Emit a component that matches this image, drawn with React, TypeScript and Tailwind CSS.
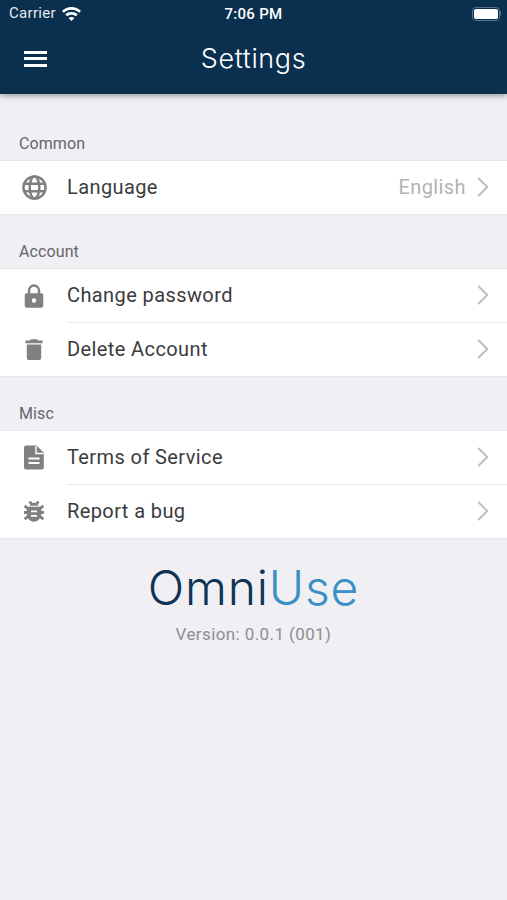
import { ReactNode } from 'react';
import { ChevronRight } from 'lucide-react';

const GlobeIcon = () => (
  <svg width="25" height="25" viewBox="0 0 26 26" fill="none" stroke="#808080" strokeWidth="2.6">
    <circle cx="13" cy="13" r="11.5" />
    <ellipse cx="13" cy="13" rx="5" ry="11.500" />
    <path d="M2.600 9h20.800M2.600 17h20.800" />
  </svg>
);

const LockIcon = () => (
  <svg width="20" height="26" viewBox="0 0 22 27" fill="none">
    <path d="M5.500 11V7.500a5.500 5.500 0 0 1 11 0V11" stroke="#808080" strokeWidth="2.600" />
    <path
      fillRule="evenodd"
      d="M3 10.500h16a2.200 2.200 0 0 1 2.200 2.200v11.600a2.200 2.200 0 0 1-2.200 2.200H3a2.200 2.200 0 0 1-2.200-2.200V12.700a2.200 2.200 0 0 1 2.200-2.200zM11 16a2.400 2.400 0 1 0 0 4.800 2.400 2.400 0 0 0 0-4.800z"
      fill="#808080"
    />
  </svg>
);

const TrashIcon = () => (
  <svg width="18" height="23" viewBox="0 0 20 24" fill="#808080">
    <path d="M6.500 0.500h7l1 1.500H19.500v3H0.500V2h5z" />
    <path d="M2 6.500h16v15a2.200 2.200 0 0 1-2.200 2.200H4.200A2.200 2.200 0 0 1 2 21.500z" />
  </svg>
);

const DocIcon = () => (
  <svg width="20" height="25" viewBox="0 0 20 25">
    <path
      fill="#808080"
      d="M2 .5h10.500L19.800 7.800V22.500a2 2 0 0 1-2 2H2a2 2 0 0 1-2-2V2.500a2 2 0 0 1 2-2z"
    />
    <path d="M12 1v7.500h7.500" fill="none" stroke="#ffffff" strokeWidth="1.400" />
    <path d="M4.500 13.500h11M4.500 18h11" stroke="#ffffff" strokeWidth="2.200" />
  </svg>
);

const BugIcon = () => (
  <svg width="20" height="21" viewBox="0 0 20 21" fill="#808080">
    <path d="M5.500 4.800C6 2.800 8 1.800 10 1.800s4 1 4.500 3z" />
    <path
      fillRule="evenodd"
      d="M4 5.800h12c1 1.200 1.500 2.800 1.500 5.200 0 5.500-3.200 9.800-7.500 9.800s-7.500-4.300-7.500-9.800c0-2.400.5-4 1.500-5.200zM7 9.500v1.800h6V9.500zM7 14v1.800h6V14z"
    />
    <path
      d="M5.500.5l2 2.500M14.500.5l-2 2.500M.5 5l3.500 2.500M19.500 5L16 7.500M0 11.500h4M20 11.500h-4M.5 18l3.500-2.500M19.500 18L16 15.500"
      stroke="#808080"
      strokeWidth="2.800"
      fill="none"
    />
  </svg>
);

const WifiIcon = () => (
  <svg width="19" height="14" viewBox="0 0 19 14" fill="#ffffff">
    <path d="M9.500 0C5.800 0 2.600 1.400 0 3.700l1.800 2C3.900 3.900 6.600 2.800 9.500 2.800s5.600 1.100 7.700 2.900l1.800-2C16.400 1.400 13.200 0 9.500 0z" />
    <path d="M9.500 5c-2.400 0-4.500.9-6.200 2.300l1.800 2c1.200-1 2.700-1.600 4.400-1.600s3.200.6 4.400 1.600l1.800-2C14 5.900 11.900 5 9.500 5z" />
    <path d="M9.500 10c-1.100 0-2.100.4-2.900 1.100l2.900 3 2.900-3c-.8-.7-1.800-1.100-2.900-1.100z" />
  </svg>
);

type RowProps = {
  icon: ReactNode;
  label: string;
  value?: string;
  divider?: boolean;
};

const Row = ({ icon, label, value, divider }: RowProps) => (
  <div className={`flex items-stretch bg-white ${divider ? 'h-[54px]' : 'h-[53px]'}`}>
    <div className="flex w-[67px] shrink-0 items-center justify-center pb-[1px] pl-[1px]">{icon}</div>
    <div className={`flex flex-1 items-center pr-[7px] ${divider ? 'border-b border-[#ebebef]' : ''}`}>
      <span className="mb-[1px] flex-1 text-[20px] tracking-[0.4px] text-[#3b3b3d]">{label}</span>
      {value && <span className="mb-[1px] text-[20px] tracking-[0.4px] text-[#b2b2b4]">{value}</span>}
      <ChevronRight size={34} strokeWidth={1.3} className="mb-[1px] text-[#bdbdc0]" />
    </div>
  </div>
);

const Section = ({ title, first, children }: { title: string; first?: boolean; children: ReactNode }) => (
  <section>
    <div
      className={`flex items-end pb-[6px] pl-[19px] text-[16px] leading-[20px] tracking-[0.1px] text-[#66666a] ${
        first ? 'h-[66px]' : 'h-[53px]'
      }`}
    >
      {title}
    </div>
    <div className="border-y border-[#e6e6ea]">{children}</div>
  </section>
);

const App = () => {
  return (
    <div className="h-[900px] w-[507px] overflow-hidden bg-[#efeff4] font-['Roboto',sans-serif]">
      {/* Header */}
      <header className="relative h-[94px] bg-[#0b2f4f] text-white shadow-[0_2px_6px_rgba(0,0,0,0.35)]">
        <div className="flex h-[27px] items-center justify-between pl-[9px] pr-[6px]">
          <div className="flex items-center gap-[6px] text-[15px] tracking-[0.3px] text-[#e4e8ec]">
            Carrier
            <WifiIcon />
          </div>
          <div className="absolute left-0 right-0 top-[5px] text-center text-[15px] font-medium leading-[18px] tracking-[0.3px]">
            7:06 PM
          </div>
          <div className="flex items-center">
            <div className="flex h-[14px] w-[28px] items-center justify-center rounded-[4px] border border-[#5a7187]">
              <div className="h-[10px] w-[24px] rounded-[2px] bg-white" />
            </div>
            <div className="h-[5px] w-[1.500px] rounded-r-sm bg-[#5a7187]" />
          </div>
        </div>
        <div className="flex h-[63px] items-center">
          <div className="ml-[24px] flex w-[23px] flex-col gap-[3.500px]">
            <div className="h-[3px] bg-white" />
            <div className="h-[3px] bg-white" />
            <div className="h-[3px] bg-white" />
          </div>
          <div className="absolute left-0 right-0 top-[41px] text-center font-['Inter',sans-serif] text-[27px] font-light leading-[36px] tracking-[0.6px]">
            Settings
          </div>
        </div>
      </header>

      <Section title="Common" first>
        <Row icon={<GlobeIcon />} label="Language" value="English" />
      </Section>
      <Section title="Account">
        <Row icon={<LockIcon />} label="Change password" divider />
        <Row icon={<TrashIcon />} label="Delete Account" />
      </Section>
      <Section title="Misc">
        <Row icon={<DocIcon />} label="Terms of Service" divider />
        <Row icon={<BugIcon />} label="Report a bug" />
      </Section>

      {/* Logo */}
      <div className="mt-[19px] flex flex-col items-center">
        <div className="font-['Inter',sans-serif] text-[48px] font-light leading-[60px] tracking-[0.8px]">
          <span className="text-[#0f3354]">Omni</span>
          <span className="text-[#3a8fc4]">Use</span>
        </div>
        <div className="mt-[6px] text-[17px] leading-[20px] tracking-[0.4px] text-[#8e8e92]">Version: 0.0.1 (001)</div>
      </div>
    </div>
  );
};

export default App;
